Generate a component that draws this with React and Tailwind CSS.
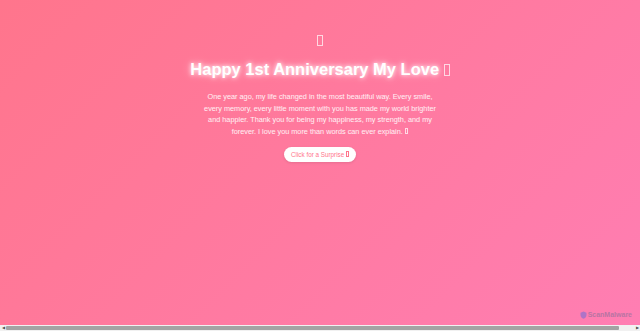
function Tofu({ className }) {
  return <span className={"inline-block border border-current align-baseline " + className}></span>;
}

export default function App() {
  return (
    <div className="w-[640px] h-[331px] flex flex-col overflow-hidden" style={{ fontFamily: '"Liberation Sans", Arial, sans-serif' }}>
      <div className="relative flex-1 bg-[linear-gradient(135deg,#ff758c,#ff7eb3)] flex flex-col items-center pt-[31px] text-white text-center">
        <div className="h-[19px] flex items-center justify-center">
          <Tofu className="w-[6px] h-[11px] opacity-70" />
        </div>
        <h1 className="mt-[9px] text-[16.5px] leading-[20px] font-bold [text-shadow:0_0_4px_rgba(255,255,255,0.9),0_0_8px_rgba(255,255,255,0.6)]">
          Happy 1st Anniversary My Love <Tofu className="w-[6px] h-[12px] opacity-70 translate-y-[1px]" />
        </h1>
        <p className="mt-[12px] max-w-[240px] text-[7.3px] leading-[11.7px] text-white/90">
          One year ago, my life changed in the most beautiful way. Every smile, every memory, every little moment with you has made my world brighter and happier. Thank you for being my happiness, my strength, and my forever. I love you more than words can ever explain. <Tofu className="w-[3.5px] h-[6px] opacity-80" />
        </p>
        <button className="mt-[9px] h-[15px] px-[7.5px] rounded-full bg-white text-[#ff758c] text-[6.3px] leading-[15px] shadow-[0_1px_3px_rgba(0,0,0,0.1)]">
          Click for a Surprise <Tofu className="w-[3px] h-[5.5px]" />
        </button>
        <div className="absolute right-[8px] bottom-[6px] flex items-center gap-[1px] opacity-60">
          <svg width="7" height="8" viewBox="0 0 7 8">
            <path d="M3.5 0.5 L6.5 1.8 V4 C6.5 6 5 7.2 3.5 7.7 C2 7.2 0.5 6 0.5 4 V1.8 Z" fill="#7b6fd6" />
          </svg>
          <span className="text-[7px] leading-[8px] font-bold text-[#8a6f9a]">ScanMalware</span>
        </div>
      </div>
      <div className="h-[6px] bg-[#f1f1f1] flex items-center px-[1px] gap-[1px]">
        <div className="w-[4px] flex justify-center text-[4px] leading-[4px] text-[#505050]">◀</div>
        <div className="flex-1 h-[4px] bg-[#a3a3a3] rounded-[1px]"></div>
        <div className="w-[14px]"></div>
        <div className="w-[4px] flex justify-center text-[4px] leading-[4px] text-[#505050]">▶</div>
      </div>
    </div>
  );
}
